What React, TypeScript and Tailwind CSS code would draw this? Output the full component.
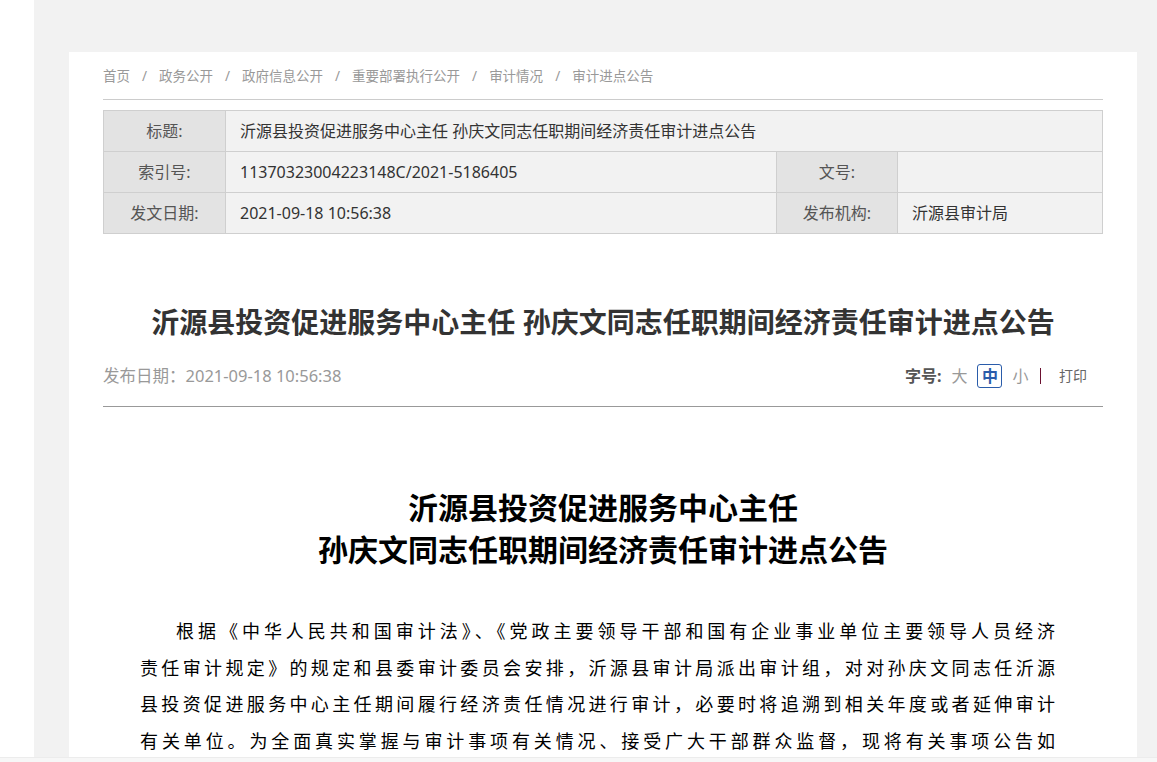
const crumbs = ['首页', '政务公开', '政府信息公开', '重要部署执行公开', '审计情况', '审计进点公告']

const bodyLines = [
  '根据《中华人民共和国审计法》、《党政主要领导干部和国有企业事业单位主要领导人员经济',
  '责任审计规定》的规定和县委审计委员会安排，沂源县审计局派出审计组，对对孙庆文同志任沂源',
  '县投资促进服务中心主任期间履行经济责任情况进行审计，必要时将追溯到相关年度或者延伸审计',
  '有关单位。为全面真实掌握与审计事项有关情况、接受广大干部群众监督，现将有关事项公告如',
  '下：',
]

function Breadcrumb() {
  return (
    <div className="flex items-center pb-[11px] border-b border-[#cccccc] text-[13.5px] leading-[24px] text-[#999999]">
      {crumbs.map((c, i) => (
        <span key={c} className="flex items-center">
          {i > 0 && <span className="px-[12px]">/</span>}
          <span>{c}</span>
        </span>
      ))}
    </div>
  )
}

function InfoTable() {
  const label = 'h-[41px] border border-[#cfcfcf] bg-[#e3e3e3] text-center text-[#555555] font-normal'
  const value = 'h-[41px] border border-[#cfcfcf] bg-[#f2f2f2] pl-[14px] text-left text-[#333333]'
  return (
    <table className="mt-[10px] w-full border-collapse text-[16px] table-fixed">
      <colgroup>
        <col className="w-[122px]" />
        <col className="w-[551px]" />
        <col className="w-[121px]" />
        <col />
      </colgroup>
      <tbody>
        <tr>
          <th className={label}>标题:</th>
          <td className={value} colSpan={3}>沂源县投资促进服务中心主任 孙庆文同志任职期间经济责任审计进点公告</td>
        </tr>
        <tr>
          <th className={label}>索引号:</th>
          <td className={value}>11370323004223148C/2021-5186405</td>
          <th className={label}>文号:</th>
          <td className={value}></td>
        </tr>
        <tr>
          <th className={label}>发文日期:</th>
          <td className={value}>2021-09-18 10:56:38</td>
          <th className={label}>发布机构:</th>
          <td className={value}>沂源县审计局</td>
        </tr>
      </tbody>
    </table>
  )
}

function DateRow() {
  return (
    <div className="mt-[22px] flex items-center justify-between pb-[18px] border-b border-[#999999] leading-[24px]">
      <span className="text-[16.5px] text-[#999999]">发布日期：2021-09-18 10:56:38</span>
      <div className="flex items-center pr-[16px] text-[16px]">
        <span className="font-bold text-[#555555]">字号:</span>
        <span className="ml-[10px] text-[#999999]">大</span>
        <span className="ml-[10px] flex h-[24px] w-[25px] items-center justify-center rounded-[3px] border border-[#2a5caa] font-bold text-[#2a5caa]">中</span>
        <span className="ml-[10px] text-[#999999]">小</span>
        <span className="ml-[11px] h-[16px] w-[1.5px] bg-[#6b1030]"></span>
        <span className="ml-[18px] text-[14px] text-[#666666]">打印</span>
      </div>
    </div>
  )
}

export default function App() {
  return (
    <div className="flex h-[762px] flex-col overflow-hidden bg-white font-['Noto_Sans','Noto_Sans_CJK_SC',sans-serif]">
      <div className="flex min-h-0 flex-1">
        <div className="w-[34px] shrink-0 bg-white"></div>
        <div className="flex-1 bg-[#f2f2f2] pl-[35px] pt-[52px]">
          <div className="h-full w-[1068px] bg-white px-[34px] pt-[12px]">
            <Breadcrumb />
            <InfoTable />
            <h1 className="mt-[68px] text-center text-[28px] font-bold leading-[40px] text-[#333333]">
              沂源县投资促进服务中心主任 孙庆文同志任职期间经济责任审计进点公告
            </h1>
            <DateRow />
            <h2 className="mt-[78px] text-center text-[30px] font-bold leading-[42px] text-black font-['Noto_Sans_CJK_SC',serif]">
              沂源县投资促进服务中心主任
              <br />
              孙庆文同志任职期间经济责任审计进点公告
            </h2>
            <p className="mt-[43px] pl-[37px] pr-[45px] indent-[2em] text-justify [text-align-last:justify] text-[18px] leading-[36.7px] tracking-[3px] text-black font-['Noto_Sans_CJK_SC',serif]">
              {bodyLines.map((l, i) => (
                <span key={i}>
                  {l}
                  {i < bodyLines.length - 1 && <br />}
                </span>
              ))}
            </p>
          </div>
        </div>
      </div>
      <div className="h-[5px] shrink-0 border-t border-[#ececec] bg-[#f7f7f7]"></div>
    </div>
  )
}
